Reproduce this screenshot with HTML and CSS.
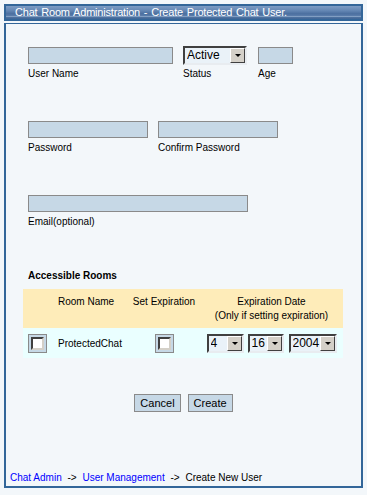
FILE: index.html
```html
<!DOCTYPE html>
<html lang="en">
<head>
    <meta charset="UTF-8">
    <title>Chat Room Administration - Create Protected Chat User</title>
    <link rel="stylesheet" href="styles.css">
</head>
<body>
    <div class="title-bar">Chat Room Administration - Create Protected Chat User.</div>
    <div class="panel">
        <form class="user-form">
            <div class="field-row first">
                <label class="field">
                    <input class="txt w-name" type="text">
                    <span>User Name</span>
                </label>
                <label class="field status">
                    <span class="sel sel-status">
                        <select><option>Active</option><option>Inactive</option></select>
                        <span class="arrow"></span>
                    </span>
                    <span>Status</span>
                </label>
                <label class="field">
                    <input class="txt w-age" type="text">
                    <span>Age</span>
                </label>
            </div>
            <div class="field-row">
                <label class="field">
                    <input class="txt w-pass" type="password">
                    <span>Password</span>
                </label>
                <label class="field">
                    <input class="txt w-pass" type="password">
                    <span>Confirm Password</span>
                </label>
            </div>
            <div class="field-row">
                <label class="field">
                    <input class="txt w-email" type="text">
                    <span>Email(optional)</span>
                </label>
            </div>

            <div class="rooms-title">Accessible Rooms</div>
            <table class="rooms">
                <thead>
                    <tr>
                        <th class="c-check"></th>
                        <th class="c-name">Room Name</th>
                        <th class="c-set">Set Expiration</th>
                        <th class="c-date">Expiration Date<br>(Only if setting expiration)</th>
                    </tr>
                </thead>
                <tbody>
                    <tr>
                        <td class="c-check"><span class="chk"><input type="checkbox"></span></td>
                        <td class="c-name">ProtectedChat</td>
                        <td class="c-set"><span class="chk"><input type="checkbox"></span></td>
                        <td class="c-date">
                            <div class="date-pick">
                                <span class="sel sel-month"><select><option>4</option></select><span class="arrow"></span></span>
                                <span class="sel sel-day"><select><option>16</option></select><span class="arrow"></span></span>
                                <span class="sel sel-year"><select><option>2004</option></select><span class="arrow"></span></span>
                            </div>
                        </td>
                    </tr>
                </tbody>
            </table>

            <div class="actions">
                <button type="button" class="btn">Cancel</button>
                <button type="button" class="btn">Create</button>
            </div>
        </form>
        <div class="crumbs">
            <a href="#">Chat Admin</a> <span class="sep">-&gt;</span>
            <a href="#">User Management</a> <span class="sep">-&gt;</span>
            Create New User
        </div>
    </div>
</body>
</html>
```

FILE: styles.css
```css
:root {
    --page-bg: #f3f7fa;
    --blue-border: #336699;
    --field-bg: #c6d8e6;
    --field-border: #8a8a8a;
    --head-bg: #feecb9;
    --row-bg: #eaffff;
    --btn-face: #d4d0c8;
    --text: #000;
}
html, body {
    margin: 0;
    padding: 0;
    background: var(--page-bg);
    font-family: 'Liberation Sans', Arial, sans-serif;
    font-size: 10px;
    color: var(--text);
}
.title-bar {
    margin: 4px 4px 0 4px;
    height: 13px;
    border: 2px solid var(--blue-border);
    background: linear-gradient(180deg, #7d9cc4 0%, #6487b4 35%, #4b6f9f 60%, #5a7dab 75%, #8aa6c8 82%, #4d719f 88%, #3f6495 100%);
    color: #fff;
    font-size: 11px;
    line-height: 13px;
    padding-left: 9px;
    letter-spacing: -0.2px;
    word-spacing: 1px;
}
.panel {
    margin: 2px 4px 0 4px;
    height: 462px;
    border: 2px solid var(--blue-border);
    border-top-width: 1px;
    display: flex;
    flex-direction: column;
    justify-content: space-between;
}
.user-form {
    padding: 23px 0 0 15px;
}
.field-row {
    display: flex;
    gap: 10px;
    height: 74px;
    padding-left: 7px;
}
.field {
    display: flex;
    flex-direction: column;
    gap: 4px;
}
.field.status {
    gap: 3px;
    margin-top: -1px;
    margin-right: 1px;
}
.txt {
    box-sizing: border-box;
    height: 17px;
    margin: 0;
    border: 1px solid var(--field-border);
    background: var(--field-bg);
    font: inherit;
}
.w-name { width: 145px; }
.w-age { width: 35px; }
.w-pass { width: 120px; }
.w-email { width: 220px; }

.sel {
    position: relative;
    display: inline-block;
    box-sizing: border-box;
    height: 19px;
    border: 2px solid;
    border-color: #404040 #e8ecf0 #e8ecf0 #404040;
    background: #eaf2f8;
}
.sel select {
    appearance: none;
    -webkit-appearance: none;
    border: 0;
    margin: 0;
    padding: 0 0 0 2px;
    height: 15px;
    width: 100%;
    background: transparent;
    font-family: 'Liberation Sans', Arial, sans-serif;
    font-size: 12px;
    line-height: 15px;
}
.sel .arrow {
    position: absolute;
    top: 0;
    right: 0;
    width: 13px;
    height: 13px;
    background: var(--btn-face);
    border: 1px solid;
    border-color: #fff #404040 #404040 #fff;
    pointer-events: none;
}
.sel .arrow::after {
    content: "";
    position: absolute;
    left: 4px;
    top: 5px;
    border-left: 3px solid transparent;
    border-right: 3px solid transparent;
    border-top: 3px solid #000;
}
.sel-status { width: 64px; }

.rooms-title {
    font-weight: bold;
    margin: 1px 0 8px 7px;
}
.rooms {
    border-collapse: collapse;
    table-layout: fixed;
    width: 320px;
    margin-left: 2px;
}
.rooms th {
    background: var(--head-bg);
    font-weight: normal;
    height: 39px;
    padding: 6px 0 0 0;
    box-sizing: border-box;
    line-height: 14px;
    vertical-align: top;
}
.rooms td {
    background: var(--row-bg);
    height: 30px;
    padding: 0;
    text-align: center;
}
.c-check { width: 29px; }
.c-name { width: 76px; }
.c-set { width: 72px; }
.c-date { width: 143px; }
.rooms .c-name {
    text-align: left;
    padding-left: 6px;
}
.chk {
    display: inline-block;
    box-sizing: border-box;
    width: 19px;
    height: 19px;
    border: 1px solid var(--field-border);
    background: var(--field-bg);
    padding: 2px;
    vertical-align: middle;
}
.chk input {
    appearance: none;
    -webkit-appearance: none;
    display: block;
    box-sizing: border-box;
    margin: 0;
    width: 13px;
    height: 13px;
    background: #fff;
    border: 2px solid;
    border-color: #404040 #d4d0c8 #d4d0c8 #404040;
}
.date-pick {
    display: flex;
    justify-content: center;
    gap: 4px;
}
.sel-month { width: 37px; }
.sel-day { width: 36px; }
.sel-year { width: 48px; margin-left: 1px; }

.actions {
    display: flex;
    justify-content: center;
    gap: 7px;
    margin: 36px 0 0 -15px;
}
.btn {
    box-sizing: border-box;
    height: 18px;
    padding: 0 5px;
    border: 1px solid var(--field-border);
    background: var(--field-bg);
    font-family: 'Liberation Sans', Arial, sans-serif;
    font-size: 11px;
}
.crumbs {
    padding: 0 0 3px 4px;
    font-size: 10px;
}
.crumbs a {
    color: #0000ff;
    text-decoration: none;
}
.crumbs .sep {
    margin: 0 3px;
}
```
